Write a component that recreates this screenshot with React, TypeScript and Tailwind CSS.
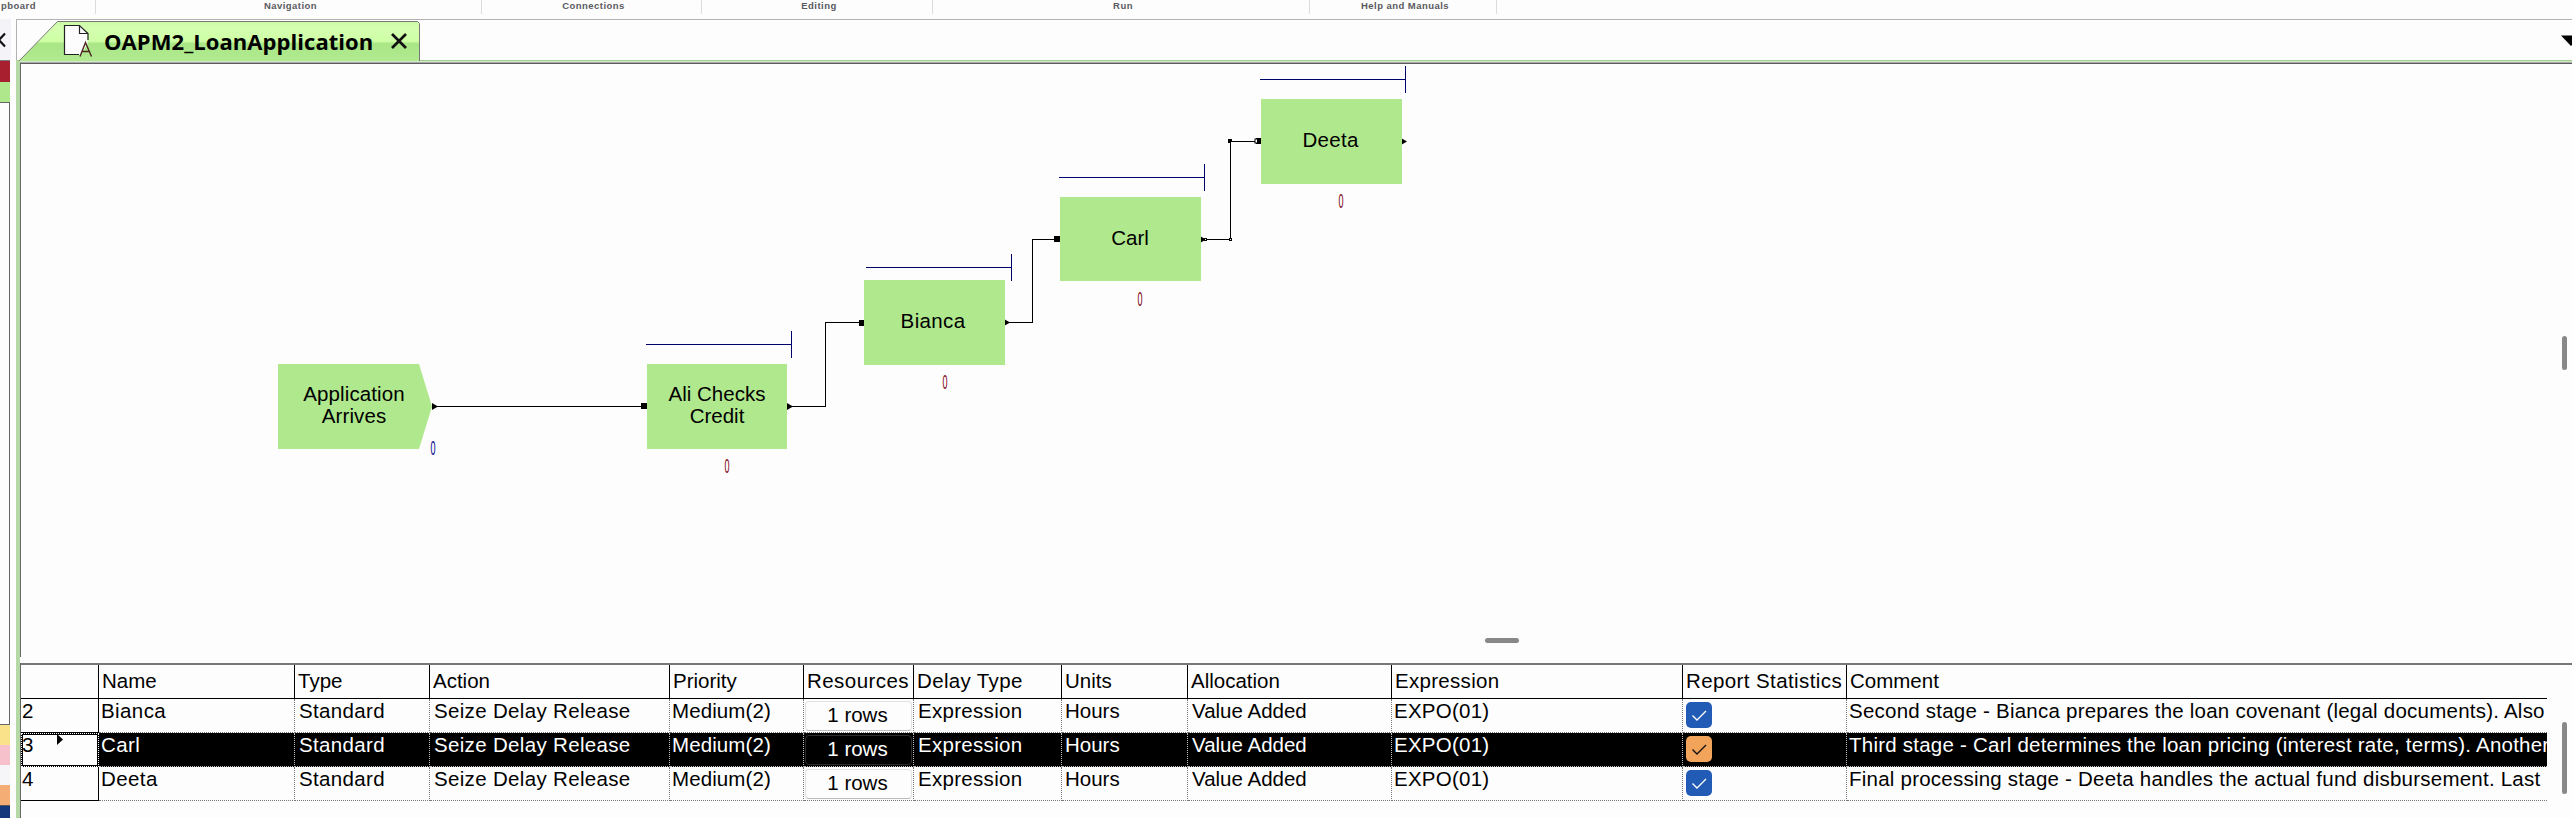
import type { ReactNode } from "react";

const ribbonGroups = [
  { label: "Navigation", cls: "w-[386px]" },
  { label: "Connections", cls: "w-[220px]" },
  { label: "Editing", cls: "w-[231px]" },
  { label: "Run", cls: "w-[377px]" },
  { label: "Help and Manuals", cls: "w-[187px]" },
];

function Ribbon() {
  return (
    <div className="flex h-[19px] w-full shrink-0 items-start text-[9.5px] font-bold leading-[11px] tracking-[0.45px] text-[#5a5a60]">
      <div className="h-[14px] w-[96px] border-r border-[#dcdcdc] pl-px">pboard</div>
      {ribbonGroups.map((g) => (
        <div key={g.label} className={`h-[14px] border-r border-[#dcdcdc] pl-[4px] text-center ${g.cls}`}>
          {g.label}
        </div>
      ))}
    </div>
  );
}

function LeftStrip() {
  return (
    <div className="flex h-full w-[16px] shrink-0 flex-col">
      <div className="flex h-[41px] w-[11px] items-center overflow-hidden bg-[#f4f3f7]">
        <svg width="6" height="16" viewBox="0 0 6 16" className="mt-[1px]">
          <path d="M5 1.5 L-1 8 L5 14.5" fill="none" stroke="#111" strokeWidth="2.2" />
        </svg>
      </div>
      <div className="flex w-[10px] grow flex-col">
        <div className="h-[22px] border-t border-[#777] bg-[#a8202f]" />
        <div className="h-[20px] bg-[#afe78c]" />
        <div className="h-[623px] border-y border-r border-[#666]" />
        <div className="h-[20px] bg-[#fae28a]" />
        <div className="h-[20px] bg-[#f7c1cb]" />
        <div className="h-[20px] bg-[#f6f6f8]" />
        <div className="h-[20px] bg-[#f4ae75]" />
        <div className="grow border-t border-[#555] bg-[#14367a]" />
      </div>
    </div>
  );
}

function TabBar() {
  return (
    <div className="flex h-[41px] w-full shrink-0 justify-between border-l border-t border-[#b4b0b4]">
      <div className="relative flex h-[41px] w-[404px] items-center">
        <svg className="absolute left-0 top-0" width="404" height="41" viewBox="0 0 404 41">
          <defs>
            <linearGradient id="tab" x1="0" y1="0" x2="0" y2="1">
              <stop offset="0" stopColor="#caf9a4" />
              <stop offset="0.15" stopColor="#d5ffb0" />
              <stop offset="0.5" stopColor="#ceffa6" />
              <stop offset="0.56" stopColor="#a9e685" />
              <stop offset="1" stopColor="#b2ea92" />
            </linearGradient>
          </defs>
          <path d="M2 41 L40.500 1.500 H400.500 L402.500 3.500 V41" fill="url(#tab)" stroke="#777" />
        </svg>
        <svg className="relative ml-[46px] shrink-0" width="30" height="34" viewBox="0 0 30 34">
          <path d="M1.500 1.500 H16.500 L24.500 9.500 V20 L18 30.500 H1.500 Z" fill="#fdfdfd" />
          <path d="M25 16 V9.500 L16.500 1.500 H1.500 V30.500 H16 M16.500 1.500 V9.500 H25" fill="none" stroke="#222" strokeWidth="1.200" />
          <path d="M17 32.500 L22.500 18.500 L28.500 32.500 M19 27.500 H26.500" fill="none" stroke="#4a2620" strokeWidth="1.400" />
        </svg>
        <span className="relative ml-[11px] w-[270px] whitespace-nowrap font-['Open_Sans'] text-[22px] font-bold leading-[30px] tracking-[0.06px] text-black">
          OAPM2_LoanApplication
        </span>
        <svg className="relative ml-[16px]" width="18" height="16" viewBox="0 0 18 16">
          <path d="M2 1 L16 15 M16 1 L2 15" stroke="#111" strokeWidth="2.700" />
        </svg>
      </div>
      <svg className="mt-[15px]" width="11" height="12" viewBox="0 0 11 12">
        <path d="M0 0.500 H20 L10 11 Z" fill="#000" />
      </svg>
    </div>
  );
}

/* Canvas coordinates are relative to the flow view's inner corner. */
const processes = [
  { name: "Ali Checks Credit", box: "left-[626px] top-[300px] w-[140px] h-[85px]", label: "w-[104px]" },
  { name: "Bianca", box: "left-[843px] top-[216px] w-[141px] h-[85px]", label: "mr-[3px] tracking-[0.35px]" },
  { name: "Carl", box: "left-[1039px] top-[133px] w-[141px] h-[84px]", label: "mr-px" },
  { name: "Deeta", box: "left-[1240px] top-[35px] w-[141px] h-[85px]", label: "mr-[2px] tracking-[0.3px]" },
];

const counters = [
  { id: "create", cls: "left-[402px] top-[375px] text-[#00008b]" },
  { id: "ali", cls: "left-[696px] top-[393px] text-[#7a0010]" },
  { id: "bianca", cls: "left-[914px] top-[309px] text-[#7a0010]" },
  { id: "carl", cls: "left-[1109px] top-[226px] text-[#7a0010]" },
  { id: "deeta", cls: "left-[1310px] top-[128px] text-[#7a0010]" },
];

const queues = [
  [625, 280],
  [845, 203],
  [1038, 113],
  [1239, 15],
];

const ports = [
  [411, 342],
  [766, 342],
  [983, 258],
  [1179, 175],
  [1380, 77],
];

const entries = [
  [620, 339],
  [838, 256],
  [1033, 172],
  [1235, 74],
];

function Canvas() {
  return (
    <div className="relative h-[593px] w-full shrink-0 overflow-hidden border-l-[1.500px] border-[#666] font-['Liberation_Sans',sans-serif] text-[20.5px] leading-[22px] text-black">
      <svg className="absolute left-0 top-0" width="1500" height="593" viewBox="0 0 1500 593">
        <path d="M257 300 H398 L411 342.500 L398 385 H257 Z" fill="#b0e88d" />
        <g fill="none" stroke="#000" shapeRendering="crispEdges">
          <path d="M411 342.500 H622" />
          <path d="M766 342.500 H804.500 V258.500 H839" />
          <path d="M984 258.500 H1011.500 V175.500 H1035" />
          <path d="M1184 175.500 H1209.500 V77.500 H1236" />
        </g>
        <g fill="none" stroke="#00006b" shapeRendering="crispEdges">
          {queues.map(([x, y]) => (
            <path key={x} d={`M${x} ${y + 0.5} H${x + 146} M${x + 145.5} ${y - 13} V${y + 14}`} />
          ))}
        </g>
        {ports.map(([x, y]) => (
          <path key={x} d={`M${x} ${y - 3} L${x + 6} ${y + 0.5} L${x} ${y + 4} Z`} fill="#000" />
        ))}
        {entries.map(([x, y]) => (
          <rect key={x} x={x} y={y} width="6" height="6" fill="#000" />
        ))}
        <path d="M1207 75 h4 v2 h-2 v2 h-2 Z" fill="#000" />
        <g fill="#fff" stroke="#000" strokeWidth="1">
          <rect x="1183.500" y="174.500" width="2" height="2" />
          <rect x="1208.500" y="174.500" width="2" height="2" />
          <rect x="1234" y="75" width="2.500" height="4" />
        </g>
      </svg>
      <div className="absolute left-[257px] top-[300px] flex h-[85px] w-[152px] items-center justify-center pb-[3px] text-center">
        <span className="w-[110px] tracking-[0.1px]">Application Arrives</span>
      </div>
      {processes.map((p) => (
        <div key={p.name} className={`absolute flex items-center justify-center bg-[#b0e88d] pb-[3px] text-center ${p.box}`}>
          <span className={p.label}>{p.name}</span>
        </div>
      ))}
      {counters.map((c) => (
        <span key={c.id} className={`absolute w-[20px] scale-x-[0.45] text-center text-[20px] leading-[18px] ${c.cls}`}>
          0
        </span>
      ))}
      <div className="absolute right-[5px] top-[272px] h-[34px] w-[5px] rounded-full bg-[#888]" />
      <div className="absolute left-[1464px] top-[574px] h-[5px] w-[34px] rounded-full bg-[#888]" />
    </div>
  );
}

const columns = [
  { title: "Name", w: "w-[196px] pl-[3px]" },
  { title: "Type", w: "w-[135px] pl-[3px]" },
  { title: "Action", w: "w-[240px] pl-[3px]" },
  { title: "Priority", w: "w-[134px] pl-[3px]" },
  { title: "Resources", w: "w-[110px] pl-[3px] tracking-[0.45px]" },
  { title: "Delay Type", w: "w-[148px] pl-[3px] tracking-[0.35px]" },
  { title: "Units", w: "w-[126px] pl-[3px]" },
  { title: "Allocation", w: "w-[204px] pl-[3px]" },
  { title: "Expression", w: "w-[291px] pl-[3px] tracking-[0.3px]" },
  { title: "Report Statistics", w: "w-[164px] pl-[3px] tracking-[0.4px]" },
];

const rows = [
  { n: 2, name: "Bianca", comment: "Second stage - Bianca prepares the loan covenant (legal documents). Also" },
  { n: 3, name: "Carl", comment: "Third stage - Carl determines the loan pricing (interest rate, terms). Another", selected: true },
  { n: 4, name: "Deeta", comment: "Final processing stage - Deeta handles the actual fund disbursement. Last" },
];

function Check({ selected }: { selected: boolean }) {
  return (
    <svg width="26" height="26" viewBox="0 0 26 26">
      <rect width="26" height="26" rx="5" fill={selected ? "#f3a45b" : "#215bb6"} />
      <path d="M6.500 13.500 L11 18 L20 9" fill="none" stroke={selected ? "#111" : "#fff"} strokeWidth="1.400" />
    </svg>
  );
}

function Cell({ w, selected, pad = "pl-[3px]", children }: { w: string; selected: boolean; pad?: string; children: ReactNode }) {
  const line = selected ? "border-[#bbb]" : "border-[#777]";
  return <div className={`h-[34px] shrink-0 overflow-hidden border-b border-r border-dotted ${line} ${w} ${pad}`}>{children}</div>;
}

function Row({ row }: { row: (typeof rows)[number] }) {
  const s = Boolean(row.selected);
  return (
    <div className={`flex h-[34px] w-[2526px] leading-[24px] ${s ? "bg-black text-white" : "text-black"}`}>
      {s ? (
        <div className="flex h-[34px] w-[78px] shrink-0 border-2 border-black bg-[#fdfdfd] text-black outline-1 -outline-offset-1 outline-dotted outline-white">
          <span className="-ml-px w-[35px] leading-[20px]">{row.n}</span>
          <svg className="-mt-px" width="7" height="12" viewBox="0 0 7 12">
            <path d="M0 0 L6 5.500 L0 11 Z" fill="#000" />
          </svg>
        </div>
      ) : (
        <div className="h-[34px] w-[78px] shrink-0 border-b border-r border-black pl-px">{row.n}</div>
      )}
      <Cell w="w-[196px]" selected={s} pad="pl-[2px] tracking-[0.4px]">{row.name}</Cell>
      <Cell w="w-[135px]" selected={s} pad="pl-[4px] tracking-[0.35px]">Standard</Cell>
      <Cell w="w-[240px]" selected={s} pad="pl-[4px] tracking-[0.33px]">Seize Delay Release</Cell>
      <Cell w="w-[134px]" selected={s} pad="pl-[2px] tracking-[0.1px]">Medium(2)</Cell>
      <Cell w="w-[110px]" selected={s} pad="px-px pt-[2px]">
        <div className={`h-[30px] rounded-[4px] border pr-[2px] text-center leading-[26px] ${s ? "border-[#2c2c2c]" : "border-[#e2e2e2] border-b-[#bbb]"}`}>1 rows</div>
      </Cell>
      <Cell w="w-[148px]" selected={s} pad="pl-[4px] tracking-[0.3px]">Expression</Cell>
      <Cell w="w-[126px]" selected={s}>Hours</Cell>
      <Cell w="w-[204px]" selected={s} pad="pl-[4px]">Value Added</Cell>
      <Cell w="w-[291px]" selected={s} pad="pl-[2px] tracking-[0.25px]">EXPO(01)</Cell>
      <Cell w="w-[164px]" selected={s} pad="pl-[3px] pt-[3px]"><Check selected={s} /></Cell>
      <div className={`h-[34px] w-[700px] overflow-hidden whitespace-nowrap border-b border-dotted pl-[2px] tracking-[0.23px] ${s ? "border-[#bbb]" : "border-[#777]"}`}>{row.comment}</div>
    </div>
  );
}

function Grid() {
  return (
    <div className="flex grow border-l border-[#666] font-['Liberation_Sans',sans-serif] text-[20.5px] whitespace-nowrap text-black">
      <div className="flex w-full justify-between border-t-2 border-[#777]">
        <div className="flex w-[2526px] flex-col">
          <div className="flex h-[34px] w-full border-b border-black leading-[31px]">
            <div className="w-[78px] shrink-0 border-r border-black" />
            {columns.map((c) => (
              <div key={c.title} className={`shrink-0 border-r border-black ${c.w}`}>{c.title}</div>
            ))}
            <div className="pl-[3px]">Comment</div>
          </div>
          {rows.map((r) => (
            <Row key={r.n} row={r} />
          ))}
        </div>
        <div className="mr-[5px] mt-[57px] h-[72px] w-[5px] rounded-full bg-[#888]" />
      </div>
    </div>
  );
}

export default function App() {
  return (
    <div className="flex h-[818px] w-[2572px] flex-col overflow-hidden bg-[#fdfdfd] font-['Liberation_Sans',sans-serif]">
      <Ribbon />
      <div className="flex min-h-0 grow">
        <LeftStrip />
        <div className="flex min-w-0 grow flex-col">
          <TabBar />
          <div className="flex min-h-0 grow border-l-4 border-t border-l-[#b5d9a5] border-t-[#9fce8f]">
            <div className="flex min-w-0 grow flex-col">
              <div className="h-px shrink-0 bg-[#d2e8c8]" />
              <div className="h-px shrink-0 bg-[#aaa]" />
              <div className="h-px shrink-0 bg-[#5c5c5c]" />
              <Canvas />
              <div className="h-[6px] shrink-0" />
              <Grid />
            </div>
          </div>
        </div>
      </div>
    </div>
  );
}
